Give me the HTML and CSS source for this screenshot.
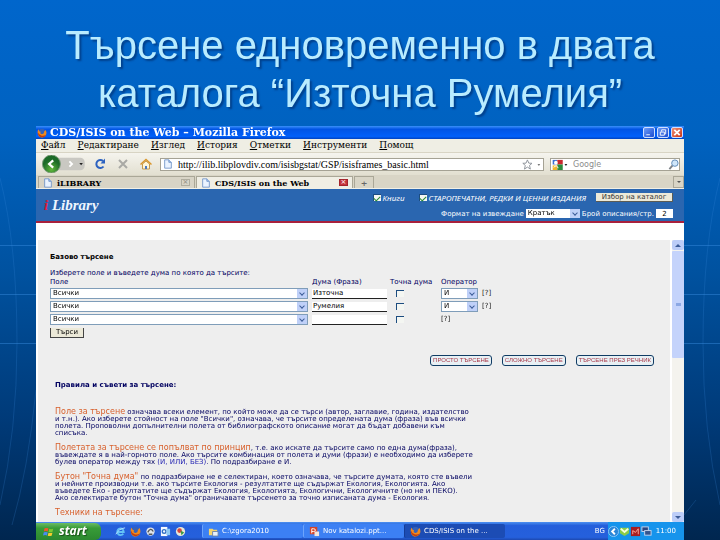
FILE: index.html
```
<!DOCTYPE html>
<html lang="bg">
<head>
    <meta charset="UTF-8">
    <meta name="viewport" content="width=device-width, initial-scale=1.0">
    <title>Търсене едновременно в двата каталога</title>
    <link rel="stylesheet" href="styles.css">
</head>
<body>

    <!-- shared icons -->
    <svg class="sprite" aria-hidden="true">
        <symbol id="fox" viewBox="0 0 12 12">
            <circle cx="6" cy="6" r="5" fill="#3461b8"/>
            <path d="M1 3Q0 8 3 10.500Q7 13 10.500 9Q12.500 5 10 2Q10 4 8.500 4Q9 7 6 7.500Q3 7 4.500 4.500Q2 4.500 2 1.500Z" fill="#f08a1c"/>
            <path d="M1 5Q1 10 5 11Q9 12 11 8Q8 10 5 9Q2 8 1 5Z" fill="#c03c10"/>
        </symbol>
        <symbol id="page" viewBox="0 0 10 12">
            <path d="M1 1H6L9 4V11H1Z" fill="#eaf3ff" stroke="#6a8fc4"/>
            <path d="M6 1V4H9" fill="#a9c6ee" stroke="#6a8fc4"/>
        </symbol>
    </svg>
    <svg class="backdrop" viewBox="0 0 720 540" preserveAspectRatio="none" aria-hidden="true">
        <g fill="none" stroke="#3a8fe0" stroke-opacity=".45">
            <path d="M0 245.500H36M0 294.500H36M0 343.500H36M684 245.500H720M684 294.500H720M684 343.500H720"/>
            <path d="M0 178Q17 245 17 343Q17 430 0 505M36 390Q28 470 12 525M720 178Q703 245 703 343Q703 430 720 505M684 515L696 500" stroke-opacity=".22"/>
        </g>
    </svg>

    <main class="slide">
        <h1>Търсене едновременно в двата каталога “Източна Румелия”</h1>

        <div class="window">
            <div class="titlebar">
                <svg class="icon"><use href="#fox"/></svg>
                <span class="caption">CDS/ISIS on the Web – Mozilla Firefox</span>
                <button class="win-btn" aria-label="Minimize"><svg viewBox="0 0 10 10"><path d="M2 7.500H6"/></svg></button>
                <button class="win-btn" aria-label="Restore"><svg viewBox="0 0 10 10"><path d="M3.500 4V2H8V6.500H6.500M2 4.500H6.500V8H2Z"/></svg></button>
                <button class="win-btn close" aria-label="Close"><svg viewBox="0 0 10 10"><path d="M2 2L8 8M8 2L2 8"/></svg></button>
            </div>

            <nav class="menu">
                <a href="#"><u>Ф</u>айл</a>
                <a href="#"><u>Р</u>едактиране</a>
                <a href="#"><u>И</u>зглед</a>
                <a href="#"><u>И</u>стория</a>
                <a href="#"><u>О</u>тметки</a>
                <a href="#"><u>И</u>нструменти</a>
                <a href="#"><u>П</u>омощ</a>
            </nav>

            <div class="toolbar">
                <button class="history" aria-label="Back and forward">
                    <svg viewBox="0 0 50 20">
                        <defs><radialGradient id="green" cy=".8"><stop offset="0" stop-color="#62b83c"/><stop offset="1" stop-color="#1d6b28"/></radialGradient></defs>
                        <rect x="14" y="3" width="34" height="14" rx="5" fill="#c9c8c2"/>
                        <circle cx="11" cy="10" r="10" fill="url(#green)" stroke="#7a9a78"/>
                        <path d="M13 6L8.500 10L13 14" fill="none" stroke="#fff" stroke-width="2.500"/>
                        <path d="M31 7L34 10L31 13" fill="none" stroke="#fff" stroke-width="2"/>
                        <path d="M42 9H46L44 11.500Z" fill="#222"/>
                    </svg>
                </button>
                <button class="tool" aria-label="Reload"><svg viewBox="0 0 12 12"><path d="M9.500 8.500A4 4 0 1 1 9 3" fill="none" stroke="#2c62c0" stroke-width="2"/><path d="M11 .5V5.500H6.500Z" fill="#2c62c0"/></svg></button>
                <button class="tool" aria-label="Stop"><svg viewBox="0 0 12 12"><path d="M2 2L10 10M10 2L2 10" stroke="#a9a9a5" stroke-width="2"/></svg></button>
                <button class="tool" aria-label="Home"><svg viewBox="0 0 12 12"><path d="M2.500 6V11H9.500V6L6 3Z" fill="#fff6d8" stroke="#c49a4c"/><path d="M.5 6.500L6 1.500L11.500 6.500" fill="none" stroke="#d9962c" stroke-width="1.500"/><path d="M5 8H7V11H5Z" fill="#4b78c0"/></svg></button>
                <div class="address">
                    <svg class="icon"><use href="#page"/></svg>
                    <input type="text" aria-label="Address" value="http://ilib.libplovdiv.com/isisbgstat/GSP/isisframes_basic.html">
                    <svg class="star" viewBox="0 0 22 12"><path d="M6 1L7.500 4.500L11 4.700L8.300 7L9.200 11L6 8.800L2.800 11L3.700 7L1 4.700L4.500 4.500Z" fill="#fff" stroke="#8b9198"/><path d="M17 5.500H20L18.500 7.500Z" fill="#777"/></svg>
                </div>
                <div class="search">
                    <svg class="engine" viewBox="0 0 18 12"><path d="M1 1H6V6H1Z" fill="#3b6fd0"/><path d="M6 1H12V6H6Z" fill="#c8282c"/><path d="M6 6H12V12H6Z" fill="#2a8b3c"/><path d="M1 7H6V12H1Z" fill="#efb52c"/><circle cx="4.500" cy="4" r="2" fill="#fff"/><path d="M2 9Q6 6 7 10" fill="none" stroke="#fff"/><path d="M14 5.500H17L15.500 7.500Z" fill="#222"/></svg>
                    <input type="text" aria-label="Search" placeholder="Google">
                    <svg class="lens" viewBox="0 0 12 12"><path d="M1.500 11L5 7" stroke="#7c8288" stroke-width="2"/><circle cx="7.500" cy="4.500" r="3.500" fill="#cfe6fa" stroke="#5a86b4"/></svg>
                </div>
            </div>

            <div class="tabs">
                <div class="tab">
                    <svg class="icon"><use href="#page"/></svg>
                    <span>iLIBRARY</span>
                    <button class="tab-close" aria-label="Close tab">×</button>
                </div>
                <div class="tab active">
                    <svg class="icon"><use href="#page"/></svg>
                    <span>CDS/ISIS on the Web</span>
                    <button class="tab-close" aria-label="Close tab">×</button>
                </div>
                <button class="tab-new" aria-label="New tab">+</button>
                <button class="tab-list" aria-label="List tabs"></button>
            </div>

            <header class="site">
                <div class="logo"><b>i</b> Library</div>
                <div class="options">
                    <div class="option-row">
                        <label class="book"><input type="checkbox" checked>Книги</label>
                        <label><input type="checkbox" checked>СТАРОПЕЧАТНИ, РЕДКИ И ЦЕННИ ИЗДАНИЯ</label>
                        <button class="catalog">Избор на каталог</button>
                    </div>
                    <div class="option-row compact">
                        <label for="format">Формат на извеждане</label>
                        <span class="select format"><select id="format"><option>Кратък</option></select></span>
                        <label for="count">Брой описания/стр.</label>
                        <input type="text" id="count" value="2">
                    </div>
                </div>
            </header>

            <div class="page">
                <div class="content">
                    <h2>Базово търсене</h2>
                    <p class="lead">Изберете поле и въведете дума по която да търсите:</p>

                    <table class="query">
                        <thead>
                            <tr><th class="col-field">Поле</th><th class="col-word">Дума (Фраза)</th><th class="col-exact">Точна дума</th><th>Оператор</th></tr>
                        </thead>
                        <tbody>
                            <tr>
                                <td><span class="select"><select aria-label="Поле"><option>Всички</option></select></span></td>
                                <td><input type="text" aria-label="Дума" value="Източна"></td>
                                <td><input type="checkbox" aria-label="Точна дума"></td>
                                <td><span class="select operator"><select aria-label="Оператор"><option>И</option></select></span><a href="#">[?]</a></td>
                            </tr>
                            <tr>
                                <td><span class="select"><select aria-label="Поле"><option>Всички</option></select></span></td>
                                <td><input type="text" aria-label="Дума" value="Румелия"></td>
                                <td><input type="checkbox" aria-label="Точна дума"></td>
                                <td><span class="select operator"><select aria-label="Оператор"><option>И</option></select></span><a href="#">[?]</a></td>
                            </tr>
                            <tr>
                                <td><span class="select"><select aria-label="Поле"><option>Всички</option></select></span></td>
                                <td><input type="text" aria-label="Дума"></td>
                                <td><input type="checkbox" aria-label="Точна дума"></td>
                                <td><a href="#">[?]</a></td>
                            </tr>
                        </tbody>
                    </table>
                    <button class="submit">Търси</button>

                    <div class="modes">
                        <button>ПРОСТО ТЪРСЕНЕ</button>
                        <button>СЛОЖНО ТЪРСЕНЕ</button>
                        <button>ТЪРСЕНЕ ПРЕЗ РЕЧНИК</button>
                    </div>

                    <div class="help">
                        <h3>Правила и съвети за търсене:</h3>
                        <p><em>Поле за търсене</em> означава всеки елемент, по който може да се търси (автор, заглавие, година, издателство<br>
                        и т.н.). Ако изберете стойност на поле "Всички", означава, че търсите определената дума (фраза) във всички<br>
                        полета. Проповолни допълнителни полета от библиографското описание могат да бъдат добавени към<br>
                        списъка.</p>
                        <p><em>Полетата за търсене се попълват по принцип</em>, т.е. ако искате да търсите само по една дума(фраза),<br>
                        въвеждате я в най-горното поле. Ако търсите комбинация от полета и думи (фрази) е необходимо да изберете<br>
                        булев оператор между тях <a href="#">(И, ИЛИ, БЕЗ)</a>. По подразбиране е И.</p>
                        <p><em>Бутон "Точна дума"</em> по подразбиране не е селектиран, което означава, че търсите думата, която сте въвели<br>
                        и нейните производни т.е. ако търсите Екология - резултатите ще съдържат Екология, Екологията. Ако<br>
                        въведете Еко - резултатите ще съдържат Екология, Екологията, Екологични, Екологичните (но не и ПЕКО).<br>
                        Ако селектирате бутон "Точна дума" ограничавате търсенето за точно изписаната дума - Екология.</p>
                        <p><em>Техники на търсене:</em></p>
                    </div>
                </div>
                <div class="scrollbar">
                    <span class="arrow up"></span>
                    <span class="thumb"></span>
                    <span class="arrow"></span>
                </div>
            </div>

            <footer class="taskbar">
                <button class="start"><svg viewBox="0 0 14 12"><path d="M2 2Q4 1 7 2L6 6Q4 5 1 6Z" fill="#ec5a2c"/><path d="M8 2.500Q10 3.500 13 2.500L12 6.500Q9 7.500 7 6.500Z" fill="#7cc832"/><path d="M1 7Q3 6 6 7L5 11Q3 10 0 11Z" fill="#4a8cf0"/><path d="M7 7.500Q9 8.500 12 7.500L11 11.500Q8 12 6 11.500Z" fill="#f8cc2c"/></svg>start</button>
                <div class="quick">
                    <svg viewBox="0 0 12 12"><path d="M2.500 6.500H9.500Q9 2.500 6 2.500Q2.500 3 2.500 6.500Q3 10 6 10Q8 10 9 8.500" fill="none" stroke="#63c2f6" stroke-width="2"/><path d="M1 9Q4 3 11 2" fill="none" stroke="#b8e2ff"/></svg>
                    <svg><use href="#fox"/></svg>
                    <svg viewBox="0 0 12 12"><circle cx="6" cy="6" r="4.500" fill="#dfe5ec"/><path d="M3 7Q6 1 9 6M4 9H8" fill="none" stroke="#555" stroke-width="1.500"/></svg>
                    <svg viewBox="0 0 12 12"><rect x="1" y="1" width="7" height="10" fill="#f4f8ff"/><circle cx="4.500" cy="6" r="2" fill="none" stroke="#2f6fc4" stroke-width="1.500"/><rect x="7" y="3" width="4" height="7" fill="#8cc8f4"/></svg>
                    <svg viewBox="0 0 12 12"><circle cx="6" cy="6" r="5" fill="#e8e8d8"/><circle cx="5" cy="5" r="2.500" fill="#d8453c"/><path d="M6 5L10 7L7 10Z" fill="#3c9a44"/></svg>
                </div>
                <button class="task"><svg viewBox="0 0 12 12"><path d="M1 3H5L6 4H10V10H1Z" fill="#f4d46c"/><path d="M5 6H11V11H5Z" fill="#e8f0fa" stroke="#6a83a8"/></svg>C:\zgora2010</button>
                <button class="task"><svg viewBox="0 0 12 12"><rect x="1" y="1" width="8" height="8" fill="#d2452c"/><path d="M3 8V3H5Q7 3 7 4.500T5 6H3" fill="none" stroke="#fff"/><rect x="6" y="6" width="5" height="5" fill="#f2e4dc"/></svg>Nov katalozi.ppt...</button>
                <button class="task current"><svg><use href="#fox"/></svg>CDS/ISIS on the ...</button>
                <span class="lang">BG</span>
                <div class="tray">
                    <svg viewBox="0 0 12 12"><circle cx="6" cy="6" r="5.500" fill="#2a86d8" stroke="#8cc8f8"/><path d="M7.500 3L4.500 6L7.500 9" fill="none" stroke="#fff" stroke-width="2"/></svg>
                    <svg viewBox="0 0 12 12"><path d="M1 2H11V8L6 11L1 8Z" fill="#8ccc48"/><path d="M2 3L6 6.500L10 3" fill="none" stroke="#f4ffe0" stroke-width="2"/></svg>
                    <svg viewBox="0 0 12 12"><rect x="1" y="1" width="10" height="10" fill="#a81c20"/><path d="M3 9V5L6 7L9 3V9" fill="none" stroke="#ffb0a0"/></svg>
                    <svg viewBox="0 0 12 12"><rect x="1" y="1" width="7" height="5" fill="#2c4680" stroke="#c8d8f0"/><rect x="4" y="5" width="7" height="5" fill="#34558e" stroke="#c8d8f0"/></svg>
                    <time>11:00</time>
                </div>
            </footer>
        </div>
    </main>

</body>
</html>
```

FILE: styles.css
```
* {
    box-sizing: border-box;
}
body {
    margin: 0;
    min-height: 100vh;
    background: linear-gradient(#0066cc 0%, #0062c0 25%, #0052a0 50%, #003a78 78%, #00264f 100%);
    font-family: "DejaVu Sans", Verdana, sans-serif;
    font-size: 7px;
    color: #000;
}
button, input, select {
    font: inherit;
    color: inherit;
    margin: 0;
    padding: 0;
    border: 0;
    border-radius: 0;
    background: none;
}
button {
    cursor: pointer;
}
a {
    color: inherit;
    text-decoration: none;
}
svg {
    display: block;
    flex: none;
}
.sprite {
    position: absolute;
    width: 0;
    height: 0;
}
.backdrop {
    position: fixed;
    inset: 0;
    width: 100%;
    height: 100%;
    z-index: -1;
}
.icon {
    width: 10px;
    height: 10px;
}

/* slide */
.slide {
    display: flex;
    flex-direction: column;
    min-height: 100vh;
    padding: 0 5%;
}
h1 {
    margin: 0;
    padding: 21px 20px 9px;
    font: 40px/48px "Liberation Sans", Arial, sans-serif;
    text-align: center;
    color: #b9ecff;
    text-shadow: 2px 2px 2px #00408c;
}
.window {
    display: flex;
    flex-direction: column;
    flex: 1;
    background: #fff;
}

/* browser */
.titlebar {
    display: flex;
    align-items: center;
    gap: 2px;
    height: 13px;
    padding: 0 1px;
    background: linear-gradient(#3a90fa, #0054e4 25%, #0060fa 80%, #0042c0);
    color: #fff;
    font: bold 11px/13px "DejaVu Serif", serif;
}
.caption {
    flex: 1;
    padding-left: 1px;
    white-space: nowrap;
}
.win-btn {
    width: 12px;
    height: 11px;
    border: 1px solid #cfe0ff;
    border-radius: 2px;
    background: linear-gradient(135deg, #6c9cf8, #1c4cd0);
}
.win-btn svg {
    width: 10px;
    height: 9px;
    fill: none;
    stroke: #fff;
    stroke-width: 1;
}
.close {
    background: linear-gradient(135deg, #f09078, #c83414);
}
.close svg {
    stroke-width: 2;
}
.menu {
    display: flex;
    gap: 12px;
    height: 14px;
    padding: 0 5px;
    background: #efeee4;
    border-bottom: 1px solid #d8d4c4;
    font: 9px/13px "DejaVu Serif", serif;
}
.toolbar {
    display: flex;
    align-items: center;
    height: 22px;
    padding: 0 4px 0 3px;
    background: linear-gradient(#f5f4ee, #e2dfd0);
}
.history svg {
    width: 50px;
    height: 18px;
}
.tool {
    width: 12px;
    margin-left: 11px;
}
.tool svg {
    width: 12px;
    height: 12px;
}
.tool:nth-child(2) {
    margin-left: 5px;
}
.address, .search {
    display: flex;
    align-items: center;
    height: 13px;
    border: 1px solid #a5a294;
    background: #fff;
}
.address {
    flex: 1;
    margin: 0 6px 0 8px;
    padding-left: 2px;
    font: 10px/11px "Liberation Serif", serif;
}
.address input {
    flex: 1;
    min-width: 0;
    padding-left: 5px;
}
.star {
    width: 22px;
    height: 11px;
}
.search {
    width: 130px;
    font: 8px/11px "DejaVu Sans", sans-serif;
}
.search input {
    flex: 1;
    min-width: 0;
    padding-left: 4px;
}
.search input::placeholder {
    color: #8c8c8c;
    opacity: 1;
}
.engine {
    width: 18px;
    height: 11px;
}
.lens {
    width: 11px;
    height: 11px;
}
.tabs {
    display: flex;
    gap: 1px;
    height: 14px;
    padding: 1px 0 0 2px;
    background: #d9d5c6;
    border-bottom: 1px solid #f2f0e6;
    font: bold 8px/12px "DejaVu Serif", serif;
}
.tab {
    display: flex;
    align-items: center;
    gap: 4px;
    flex: 0 1 157px;
    padding: 0 4px;
    border: 1px solid #aaa797;
    border-bottom: 0;
    background: #d8d4c6;
    white-space: nowrap;
}
.tab span {
    flex: 1;
}
.tab.active {
    background: #f0eee4;
}
.tab-close {
    width: 9px;
    height: 7px;
    border: 1px solid #b0ad9f;
    font: 7px/5px "DejaVu Sans", sans-serif;
    color: #8a887e;
}
.active .tab-close {
    background: #c5343c;
    border-color: #a4242c;
    color: #fff;
}
.tab-new {
    width: 20px;
    border: 1px solid #aaa797;
    border-bottom: 0;
    color: #666;
}
.tab-list {
    width: 11px;
    margin-left: auto;
    border: 1px solid #aaa797;
}
.tab-list::before {
    content: "";
    display: block;
    width: 0;
    margin: 0 auto;
    border: 2px solid transparent;
    border-top-color: #555;
    border-bottom: 0;
}

/* site header */
.site {
    display: flex;
    justify-content: space-between;
    height: 34px;
    padding: 0 11px 0 8px;
    background: #2a66b0;
    border-bottom: 2px solid #a8203c;
    color: #fff;
}
.logo {
    font: italic bold 15px/33px "Liberation Serif", serif;
    color: #eef6ff;
}
.logo b {
    color: #d81c3c;
}
.options {
    display: flex;
    flex-direction: column;
    gap: 7px;
    padding-top: 4px;
}
.option-row {
    display: flex;
    align-items: center;
    justify-content: flex-end;
    gap: 10px;
    height: 9px;
    white-space: nowrap;
}
.option-row.compact {
    gap: 2px;
}
.option-row label {
    display: flex;
    align-items: center;
    gap: 2px;
}
.option-row:first-child label {
    font: italic 8px/9px "Noto Sans", Arial, sans-serif;
}
.book {
    width: 36px;
}
input[type="checkbox"] {
    appearance: none;
    display: grid;
    place-items: center;
    width: 8px;
    height: 7px;
    border: 1px solid #1c4c80;
    border-width: 1px 0 0 1px;
    background: #f4f6f2;
}
input[type="checkbox"]:checked::before {
    content: "";
    width: 5px;
    height: 3px;
    border: solid #2a8a34;
    border-width: 0 0 1px 1px;
    transform: rotate(-45deg);
}
.catalog {
    width: 77px;
    height: 9px;
    border: 1px solid #5c5c54;
    border-width: 0 1px 1px 0;
    background: #ece9d8;
    color: #333;
    line-height: 8px;
}
#count {
    width: 17px;
    height: 9px;
    background: #fff;
    color: #000;
    text-align: center;
}
.select {
    position: relative;
    display: block;
    border: 1px solid #7f9db9;
    background: #fff;
    color: #000;
}
.select select {
    appearance: none;
    display: block;
    width: 100%;
    height: 9px;
    padding-left: 2px;
    line-height: 9px;
}
.select::before {
    content: "";
    position: absolute;
    top: 0;
    right: 0;
    bottom: 0;
    width: 10px;
    background: #bfd0f8;
    pointer-events: none;
}
.select::after {
    content: "";
    position: absolute;
    top: 2px;
    right: 3px;
    width: 3px;
    height: 3px;
    border: solid #3c5c98;
    border-width: 0 1px 1px 0;
    transform: rotate(45deg);
    pointer-events: none;
}
.format {
    width: 54px;
    border: 0;
}

/* search page */
.page {
    display: flex;
    flex: 1;
    padding: 17px 0 0 2px;
}
.content {
    flex: 1;
    min-width: 0;
    padding: 12px 16px 4px 12px;
    background: #eee;
    color: #000060;
}
h2, h3 {
    margin: 0;
    font-size: 7px;
    line-height: 10px;
}
h2 {
    color: #000;
}
.lead {
    margin: 7px 0 0;
    line-height: 8px;
}
.query {
    width: 458px;
    table-layout: fixed;
    border-collapse: collapse;
    line-height: 9px;
}
.query th {
    padding: 0;
    font-weight: normal;
    text-align: left;
    white-space: nowrap;
    height: 10px;
}
.query td {
    height: 13px;
    padding: 0;
}
.col-field {
    width: 262px;
}
.col-word {
    width: 78px;
}
.col-exact {
    width: 51px;
}
.query td:first-child .select {
    width: 258px;
}
.query input[type="text"] {
    display: block;
    width: 75px;
    height: 10px;
    padding-left: 1px;
    background: #fff;
    border-bottom: 1px solid #222;
    color: #000;
}
.query td .operator {
    display: inline-block;
    width: 37px;
    margin-right: 4px;
    vertical-align: middle;
}
.query input[type="checkbox"] {
    margin-left: 6px;
}
.query a {
    color: #222;
    vertical-align: middle;
}
.submit {
    display: block;
    width: 34px;
    height: 10px;
    margin-top: 2px;
    border: 1px solid #444;
    border-width: 0 1px 1px 1px;
    background: #ece9d8;
    color: #000;
    line-height: 9px;
}
.modes {
    display: flex;
    justify-content: flex-end;
    gap: 10px;
    margin-top: 17px;
}
.modes button {
    height: 11px;
    padding: 0 2px;
    border: 1px solid #103c64;
    border-radius: 3px;
    background: #e8f0f4;
    color: #a83848;
    font: 6px/9px "Liberation Sans", Arial, sans-serif;
    white-space: nowrap;
}
.help {
    margin-top: 14px;
    padding-left: 5px;
    line-height: 7px;
    white-space: nowrap;
}
.help h3 {
    margin-bottom: 18px;
}
.help p {
    margin: 0 0 7px;
}
.help p:last-child {
    margin: 0;
}
.help em {
    font-style: normal;
    font-size: 8px;
    color: #d8602c;
}
.help a {
    color: #1c1cb0;
}
.scrollbar {
    display: flex;
    flex-direction: column;
    width: 12px;
    margin-left: 2px;
    background: #f4f3ee;
}
.arrow {
    display: grid;
    place-items: center;
    height: 10px;
    margin-top: auto;
    border-radius: 2px;
    background: #bccdf8;
}
.arrow::before {
    content: "";
    border: 3px solid transparent;
    border-top-color: #3c5c98;
    border-bottom: 0;
}
.arrow.up {
    margin: 0;
}
.arrow.up::before {
    transform: rotate(180deg);
}
.thumb {
    display: grid;
    place-items: center;
    height: 38%;
    margin-top: 1px;
    border-radius: 1px;
    background: #c4d3fb;
}
.thumb::before {
    content: "";
    width: 5px;
    height: 3px;
    background: #8ca8e4;
}

/* taskbar */
.taskbar {
    display: flex;
    align-items: center;
    height: 18px;
    background: linear-gradient(#4c90f0, #245edb 20%, #2560dc 85%, #1c48b0);
    color: #fff;
    font-size: 7px;
}
.taskbar svg {
    width: 11px;
    height: 11px;
}
.start {
    display: flex;
    align-items: center;
    gap: 5px;
    width: 65px;
    height: 17px;
    padding-left: 7px;
    border-radius: 0 6px 6px 0;
    background: linear-gradient(#6cbc64, #389c38 30%, #2c8830);
    color: #fff;
    font: italic bold 12px/16px "Open Sans", sans-serif;
    text-shadow: 1px 1px 1px #184c18;
}
.quick {
    display: flex;
    gap: 4px;
    width: 101px;
    padding-left: 14px;
}
.task {
    display: flex;
    align-items: center;
    gap: 3px;
    flex: 0 1 101px;
    height: 14px;
    padding-left: 5px;
    border-radius: 2px;
    background: #3c80f4;
    border-left: 1px solid #6ca4fc;
    color: #fff;
    white-space: nowrap;
    overflow: hidden;
}
.task.current {
    background: #1c4cb4;
    border-color: #143c98;
}
.lang {
    margin: 0 3px 0 auto;
}
.tray {
    display: flex;
    align-items: center;
    align-self: stretch;
    padding-right: 8px;
    background: #1694ec;
}
.tray time {
    margin-left: 4px;
}
```
